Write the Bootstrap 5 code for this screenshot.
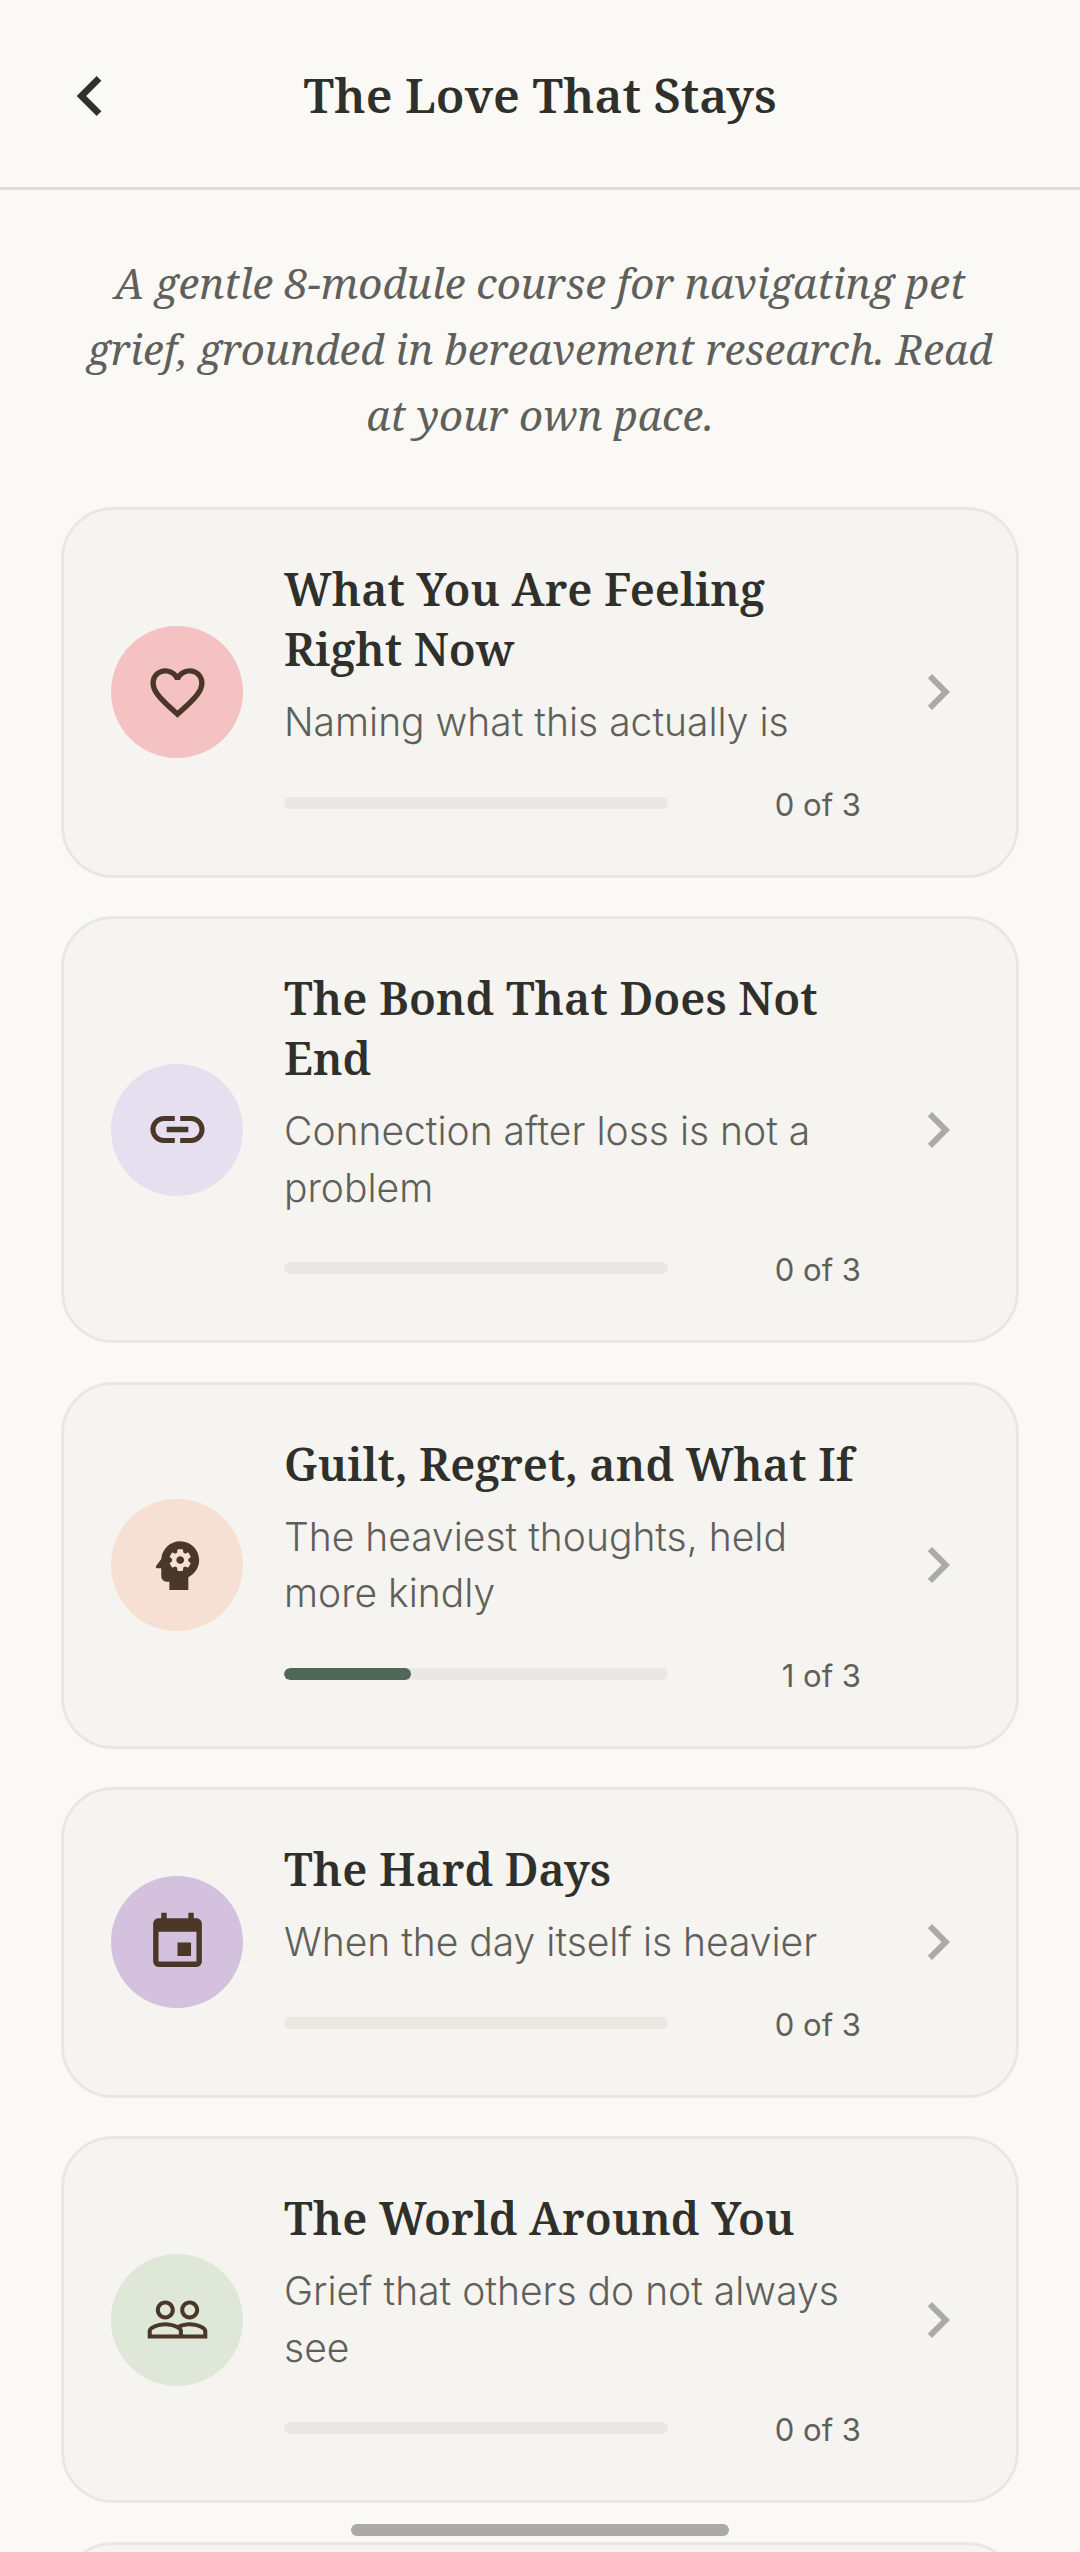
<!DOCTYPE html>
<html lang="en">
<head>
  <meta charset="UTF-8">
  <meta name="viewport" content="width=device-width, initial-scale=1.0">
  <title>The Love That Stays</title>
  <link rel="stylesheet" href="https://cdn.jsdelivr.net/npm/bootstrap@5.3.0/dist/css/bootstrap.min.css">
  <style>
    html, body { height: 100%; overflow: hidden; }
    body { background: #FAF9F6; color: #2F302B; font-family: Inter, "Noto Sans", sans-serif; }
    .top-bar { height: 190px; padding: 0 50px; border-bottom: 3px solid #DDDCD8; }
    .back-btn { width: 80px; height: 80px; fill: #2F302B; flex: none; margin-top: 5px; }
    .bar-spacer { width: 80px; flex: none; }
    .page-title { font: 600 48px/62px "Noto Serif", "DejaVu Serif", "Liberation Serif", serif; margin: 2px 0 0; }
    .intro { font: italic 400 42px/66px "Noto Serif", "DejaVu Serif", "Liberation Serif", serif; color: #5F605B; padding: 60px 72px 59px; margin: 0; text-align: center; }
    .module-list { padding: 0 61px; gap: 38.5px; }
    .module { background: #F5F4F0; border: 3px solid #E8E7E3; border-radius: 52px; }
    .module .card-body { padding: 49px 42px 49px 47px; gap: 41px; }
    .dot { width: 132px; height: 132px; flex: none; }
    .dot svg { width: 65px; height: 65px; fill: #4A3728; }
    .dot-pink { background: #F4C2C2; }
    .dot-lilac { background: #E6DFF0; }
    .dot-peach { background: #F6E0D3; }
    .dot-plum { background: #D4C1DE; }
    .dot-sage { background: #DEE7D8; }
    .module-title { font: 600 45px/60px "Noto Serif", "DejaVu Serif", "Liberation Serif", serif; margin: 0 0 15px; color: #2F302B; }
    .module-sub { font-size: 39px; line-height: 56.5px; font-weight: 300; color: #5F605B; margin: 0 0 29px; }
    .track { width: 384px; height: 12px; background: #E9E8E3; border-radius: 6px; }
    .track .progress-bar { background: #4F6858; border-radius: 6px; }
    .count { font-size: 31px; line-height: 43px; color: #5F605B; font-weight: 400; padding-top: 3px; }
    .go { width: 72px; height: 72px; fill: #ABAAA5; flex: none; }
    .stub { height: 400px; }
    .home-pill { position: fixed; left: 351px; top: 2524px; width: 378px; height: 12px; border-radius: 6px; background: #ABAAA6; }
  </style>
</head>
<body>

  <header class="top-bar d-flex align-items-center">
    <svg class="back-btn" viewBox="0 0 24 24"><path d="M15.41 7.41L14 6l-6 6 6 6 1.41-1.41L10.83 12z"/></svg>
    <h1 class="page-title flex-grow-1 text-center">The Love That Stays</h1>
    <div class="bar-spacer"></div>
  </header>

  <p class="intro">A gentle 8-module course for navigating pet grief, grounded in bereavement research. Read at your own pace.</p>

  <main class="module-list d-flex flex-column">

    <div class="card module">
      <div class="card-body d-flex align-items-center">
        <div class="dot dot-pink rounded-circle d-flex align-items-center justify-content-center">
          <svg viewBox="0 0 24 24"><path d="M16.5 3c-1.74 0-3.41.81-4.5 2.09C10.91 3.81 9.24 3 7.5 3 4.42 3 2 5.42 2 8.5c0 3.78 3.4 6.86 8.55 11.54L12 21.35l1.45-1.32C18.6 15.36 22 12.28 22 8.5 22 5.42 19.58 3 16.5 3zm-4.4 15.55l-.1.1-.1-.1C7.14 14.24 4 11.39 4 8.5 4 6.5 5.5 5 7.5 5c1.54 0 3.04.99 3.57 2.36h1.87C13.46 5.99 14.96 5 16.5 5c2 0 3.5 1.5 3.5 3.5 0 2.89-3.14 5.74-7.9 10.05z"/></svg>
        </div>
        <div class="flex-grow-1">
          <h2 class="module-title">What You Are Feeling Right Now</h2>
          <p class="module-sub">Naming what this actually is</p>
          <div class="d-flex align-items-center justify-content-between">
            <div class="progress track"><div class="progress-bar" style="width: 0%"></div></div>
            <span class="count">0 of 3</span>
          </div>
        </div>
        <svg class="go" viewBox="0 0 24 24"><path d="M8.59 16.59L10 18l6-6-6-6-1.41 1.41L13.17 12z"/></svg>
      </div>
    </div>

    <div class="card module">
      <div class="card-body d-flex align-items-center">
        <div class="dot dot-lilac rounded-circle d-flex align-items-center justify-content-center">
          <svg viewBox="0 0 24 24"><path d="M3.9 12c0-1.71 1.39-3.1 3.1-3.1h4V7H7c-2.76 0-5 2.24-5 5s2.24 5 5 5h4v-1.9H7c-1.71 0-3.1-1.39-3.1-3.1zM8 13h8v-2H8v2zm9-6h-4v1.9h4c1.71 0 3.1 1.39 3.1 3.1s-1.39 3.1-3.1 3.1h-4V17h4c2.76 0 5-2.24 5-5s-2.24-5-5-5z"/></svg>
        </div>
        <div class="flex-grow-1">
          <h2 class="module-title">The Bond That Does Not End</h2>
          <p class="module-sub">Connection after loss is not a problem</p>
          <div class="d-flex align-items-center justify-content-between">
            <div class="progress track"><div class="progress-bar" style="width: 0%"></div></div>
            <span class="count">0 of 3</span>
          </div>
        </div>
        <svg class="go" viewBox="0 0 24 24"><path d="M8.59 16.59L10 18l6-6-6-6-1.41 1.41L13.17 12z"/></svg>
      </div>
    </div>

    <div class="card module">
      <div class="card-body d-flex align-items-center">
        <div class="dot dot-peach rounded-circle d-flex align-items-center justify-content-center">
          <svg viewBox="0 0 24 24"><path d="M13 8.57c-.79 0-1.43.64-1.43 1.43s.64 1.43 1.43 1.43 1.43-.64 1.43-1.43-.64-1.43-1.43-1.43z"/><path d="M13 3C9.25 3 6.2 5.94 6.02 9.64L4.1 12.2c-.25.33-.01.8.4.8H6v3c0 1.1.9 2 2 2h1v3h7v-4.68c2.36-1.12 4-3.53 4-6.32 0-3.87-3.13-7-7-7zm3 7c0 .13-.01.26-.03.38l.83.66c.07.06.09.16.04.25l-.8 1.39c-.05.09-.15.12-.24.09l-.99-.4c-.21.16-.43.29-.67.39L14 13.83c-.01.1-.1.17-.2.17h-1.6c-.1 0-.18-.07-.2-.17l-.15-1.06c-.25-.1-.47-.23-.68-.39l-.99.4c-.09.03-.2 0-.25-.09l-.8-1.39c-.05-.08-.03-.19.04-.25l.84-.66c-.02-.12-.03-.25-.03-.38 0-.12.02-.26.04-.38l-.85-.66c-.07-.06-.09-.16-.04-.25l.8-1.39c.05-.09.15-.12.24-.09l1 .4c.2-.15.43-.29.67-.39L12 6.17c.02-.1.1-.17.2-.17h1.6c.1 0 .18.07.2.17l.15 1.06c.24.1.46.23.67.39l1-.4c.09-.03.2 0 .24.09l.8 1.39c.05.09.03.19-.04.25l-.85.66c.03.12.03.25.03.38z"/></svg>
        </div>
        <div class="flex-grow-1">
          <h2 class="module-title">Guilt, Regret, and What If</h2>
          <p class="module-sub">The heaviest thoughts, held more kindly</p>
          <div class="d-flex align-items-center justify-content-between">
            <div class="progress track"><div class="progress-bar" style="width: 33%"></div></div>
            <span class="count">1 of 3</span>
          </div>
        </div>
        <svg class="go" viewBox="0 0 24 24"><path d="M8.59 16.59L10 18l6-6-6-6-1.41 1.41L13.17 12z"/></svg>
      </div>
    </div>

    <div class="card module">
      <div class="card-body d-flex align-items-center">
        <div class="dot dot-plum rounded-circle d-flex align-items-center justify-content-center">
          <svg viewBox="0 0 24 24"><path d="M17 12h-5v5h5v-5zM16 1v2H8V1H6v2H5c-1.11 0-1.99.9-1.99 2L3 19c0 1.1.89 2 2 2h14c1.1 0 2-.9 2-2V5c0-1.1-.9-2-2-2h-1V1h-2zm3 18H5V8h14v11z"/></svg>
        </div>
        <div class="flex-grow-1">
          <h2 class="module-title">The Hard Days</h2>
          <p class="module-sub">When the day itself is heavier</p>
          <div class="d-flex align-items-center justify-content-between">
            <div class="progress track"><div class="progress-bar" style="width: 0%"></div></div>
            <span class="count">0 of 3</span>
          </div>
        </div>
        <svg class="go" viewBox="0 0 24 24"><path d="M8.59 16.59L10 18l6-6-6-6-1.41 1.41L13.17 12z"/></svg>
      </div>
    </div>

    <div class="card module">
      <div class="card-body d-flex align-items-center">
        <div class="dot dot-sage rounded-circle d-flex align-items-center justify-content-center">
          <svg viewBox="0 0 24 24"><path d="M16.5 13c-1.2 0-3.07.34-4.5 1-1.43-.67-3.3-1-4.5-1C5.33 13 1 14.08 1 16.25V19h22v-2.75c0-2.17-4.33-3.25-6.5-3.25zm-4 4.5h-10v-1.25c0-.54 2.56-1.75 5-1.75s5 1.21 5 1.75v1.25zm9 0H14v-1.25c0-.46-.2-.86-.52-1.22.88-.3 1.96-.53 3.02-.53 2.44 0 5 1.21 5 1.75v1.25zM7.5 12c1.93 0 3.5-1.57 3.5-3.5S9.43 5 7.5 5 4 6.57 4 8.5 5.57 12 7.5 12zm0-5.5c1.1 0 2 .9 2 2s-.9 2-2 2-2-.9-2-2 .9-2 2-2zm9 5.5c1.93 0 3.5-1.57 3.5-3.5S18.43 5 16.5 5 13 6.57 13 8.5s1.57 3.5 3.5 3.5zm0-5.5c1.1 0 2 .9 2 2s-.9 2-2 2-2-.9-2-2 .9-2 2-2z"/></svg>
        </div>
        <div class="flex-grow-1">
          <h2 class="module-title">The World Around You</h2>
          <p class="module-sub">Grief that others do not always see</p>
          <div class="d-flex align-items-center justify-content-between">
            <div class="progress track"><div class="progress-bar" style="width: 0%"></div></div>
            <span class="count">0 of 3</span>
          </div>
        </div>
        <svg class="go" viewBox="0 0 24 24"><path d="M8.59 16.59L10 18l6-6-6-6-1.41 1.41L13.17 12z"/></svg>
      </div>
    </div>

    <!-- only the top edge of the next module shows in the window -->
    <div class="card module stub"></div>

  </main>

  <div class="home-pill"></div>

  <script src="https://cdn.jsdelivr.net/npm/bootstrap@5.3.0/dist/js/bootstrap.bundle.min.js"></script>
</body>
</html>
